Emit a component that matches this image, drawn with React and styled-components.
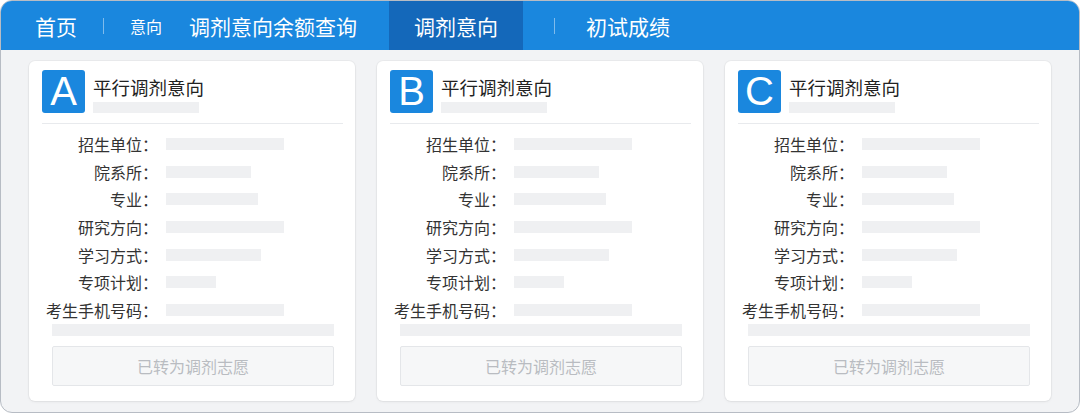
import React from "react";
import styled, { createGlobalStyle } from "styled-components";

const Global = createGlobalStyle`
  html, body { margin: 0; padding: 0; background: #ffffff; }
  body { font-family: "Noto Sans CJK SC", "Noto Sans", sans-serif; }
  * { box-sizing: border-box; }
`;

const Window = styled.div`
  width: 1080px;
  height: 413px;
  border: 1px solid #b7bcc4;
  border-radius: 12px;
  overflow: hidden;
  background: #f2f3f5;
  display: flex;
  flex-direction: column;
`;

const NavBar = styled.div`
  height: 49px;
  flex: none;
  background: #1a87de;
  display: flex;
  align-items: stretch;
  padding-left: 34px;
`;

const NavItem = styled.div`
  display: flex;
  align-items: center;
  color: #ffffff;
  font-size: ${(p) => (p.$small ? 16 : 21)}px;
  padding: 0 ${(p) => p.$pad || 0}px;
  margin-right: ${(p) => p.$mr || 0}px;
  background: ${(p) => (p.$active ? "#1468ba" : "transparent")};
  white-space: nowrap;
`;

const Sep = styled.div`
  align-self: center;
  width: 1px;
  height: 16px;
  background: #7fbbec;
  margin: 0 ${(p) => p.$m || 26}px;
`;

const Cards = styled.div`
  flex: 1;
  display: grid;
  grid-template-columns: repeat(3, 326px);
  column-gap: 22px;
  padding: 11px 0 0 28px;
`;

const Card = styled.div`
  height: 340px;
  background: #ffffff;
  border-radius: 6px;
  box-shadow: 0 0 0 1px rgba(0, 0, 0, 0.03), 0 1px 3px rgba(0, 0, 0, 0.06);
  padding: 9px 12px 14px 13px;
  display: flex;
  flex-direction: column;
`;

const CardHead = styled.div`
  display: flex;
  gap: 8px;
  padding-bottom: 10px;
  border-bottom: 1px solid #e8eaed;
`;

const Badge = styled.div`
  width: 43px;
  height: 43px;
  border-radius: 3px;
  background: #1a87de;
  color: #ffffff;
  font-family: "Liberation Sans", Arial, sans-serif;
  font-size: 40px;
  line-height: 43px;
  text-align: center;
`;

const HeadText = styled.div`
  padding-top: 6px;
  display: flex;
  flex-direction: column;
`;

const Title = styled.div`
  font-size: 18.5px;
  line-height: 22px;
  color: #222222;
`;

const Bar = styled.div`
  height: ${(p) => p.$h || 12}px;
  width: ${(p) => (p.$w ? `${p.$w}px` : "auto")};
  background: #eff0f2;
  margin-top: ${(p) => p.$mt || 0}px;
`;

const Fields = styled.div`
  display: grid;
  grid-template-columns: 116px 1fr;
  column-gap: 8px;
  grid-auto-rows: 27.7px;
  align-items: center;
  padding-top: 6px;
`;

const Label = styled.div`
  text-align: right;
  font-size: 16px;
  color: #333333;
  white-space: nowrap;
`;

const Footer = styled.div`
  padding: 0 9px 0 10px;
  display: flex;
  flex-direction: column;
`;

const Button = styled.div`
  margin-top: 10px;
  height: 40px;
  border: 1px solid #e4e6e9;
  border-radius: 2px;
  background: #f6f7f8;
  color: #b9bcc1;
  font-size: 16px;
  display: flex;
  align-items: center;
  justify-content: center;
`;

const fields = [
  ["招生单位：", 118],
  ["院系所：", 85],
  ["专业：", 92],
  ["研究方向：", 118],
  ["学习方式：", 95],
  ["专项计划：", 50],
  ["考生手机号码：", 118],
];

function IntentCard({ letter }) {
  return (
    <Card>
      <CardHead>
        <Badge>{letter}</Badge>
        <HeadText>
          <Title>平行调剂意向</Title>
          <Bar $w={106} $h={11} $mt={4} />
        </HeadText>
      </CardHead>
      <Fields>
        {fields.map(([label, w]) => (
          <React.Fragment key={label}>
            <Label>{label}</Label>
            <Bar $w={w} />
          </React.Fragment>
        ))}
      </Fields>
      <Footer>
        <Bar $h={12} />
        <Button>已转为调剂志愿</Button>
      </Footer>
    </Card>
  );
}

export default function App() {
  return (
    <>
      <Global />
      <Window>
        <NavBar>
          <NavItem>首页</NavItem>
          <Sep $m={26} />
          <NavItem $small $mr={27}>意向</NavItem>
          <NavItem $mr={32}>调剂意向余额查询</NavItem>
          <NavItem $active $pad={25}>调剂意向</NavItem>
          <Sep $m={31} />
          <NavItem>初试成绩</NavItem>
        </NavBar>
        <Cards>
          <IntentCard letter="A" />
          <IntentCard letter="B" />
          <IntentCard letter="C" />
        </Cards>
      </Window>
    </>
  );
}
